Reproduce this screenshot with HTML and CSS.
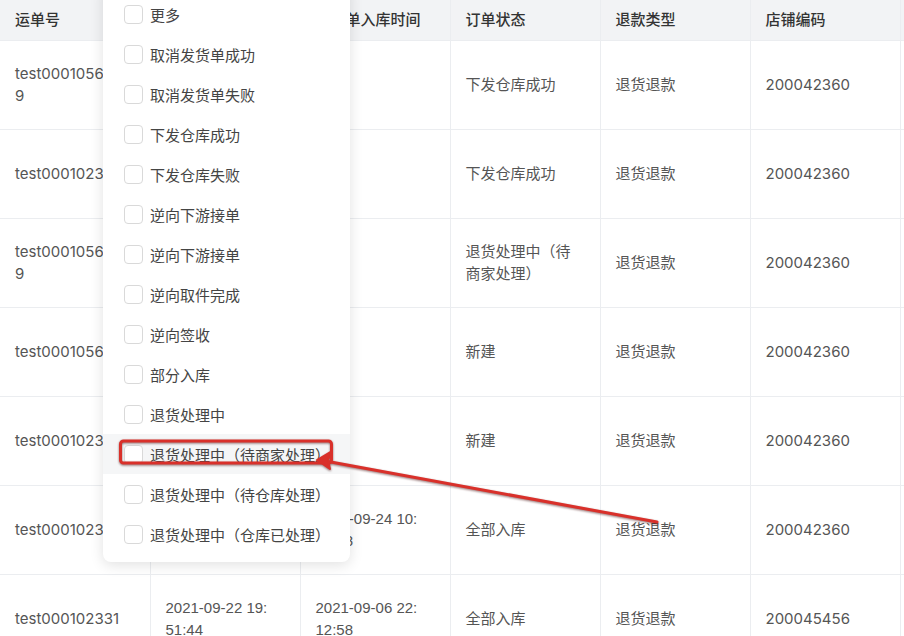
FILE: index.html
```html
<!DOCTYPE html>
<html lang="zh-CN">
<head>
    <meta charset="UTF-8">
    <meta name="viewport" content="width=device-width, initial-scale=1.0">
    <title>退货单列表</title>
    <link rel="stylesheet" href="styles.css">
</head>

<body>
    <main class="page">
        <table class="grid">
            <colgroup>
                <col><col><col><col><col><col><col>
            </colgroup>
            <thead>
                <tr>
                    <th>运单号</th>
                    <th>退货申请时间</th>
                    <th>退货单入库时间</th>
                    <th>订单状态</th>
                    <th>退款类型</th>
                    <th>店铺编码</th>
                    <th></th>
                </tr>
            </thead>
            <tbody>
                <tr>
                    <td>test0001056199</td>
                    <td class="time">2021-09-26 14:20:11</td>
                    <td class="time"></td>
                    <td>下发仓库成功</td>
                    <td>退货退款</td>
                    <td>200042360</td>
                    <td></td>
                </tr>
                <tr>
                    <td>test000102352</td>
                    <td class="time">2021-09-26 11:05:32</td>
                    <td class="time"></td>
                    <td>下发仓库成功</td>
                    <td>退货退款</td>
                    <td>200042360</td>
                    <td></td>
                </tr>
                <tr>
                    <td>test0001056189</td>
                    <td class="time">2021-09-25 17:42:08</td>
                    <td class="time"></td>
                    <td>退货处理中（待商家处理）</td>
                    <td>退货退款</td>
                    <td>200042360</td>
                    <td></td>
                </tr>
                <tr>
                    <td>test000105662</td>
                    <td class="time">2021-09-25 10:13:47</td>
                    <td class="time"></td>
                    <td>新建</td>
                    <td>退货退款</td>
                    <td>200042360</td>
                    <td></td>
                </tr>
                <tr>
                    <td>test000102348</td>
                    <td class="time">2021-09-24 16:30:25</td>
                    <td class="time"></td>
                    <td>新建</td>
                    <td>退货退款</td>
                    <td>200042360</td>
                    <td></td>
                </tr>
                <tr>
                    <td>test000102337</td>
                    <td class="time">2021-09-24 09:58:19</td>
                    <td class="time">2021-09-24 10:51:38</td>
                    <td>全部入库</td>
                    <td>退货退款</td>
                    <td>200042360</td>
                    <td></td>
                </tr>
                <tr>
                    <td>test000102331</td>
                    <td class="time">2021-09-22 19:51:44</td>
                    <td class="time">2021-09-06 22:12:58</td>
                    <td>全部入库</td>
                    <td>退货退款</td>
                    <td>200045456</td>
                    <td></td>
                </tr>
            </tbody>
        </table>

        <ul class="dropdown">
            <li class="option"><span class="box"></span>更多</li>
            <li class="option"><span class="box"></span>取消发货单成功</li>
            <li class="option"><span class="box"></span>取消发货单失败</li>
            <li class="option"><span class="box"></span>下发仓库成功</li>
            <li class="option"><span class="box"></span>下发仓库失败</li>
            <li class="option"><span class="box"></span>逆向下游接单</li>
            <li class="option"><span class="box"></span>逆向下游接单</li>
            <li class="option"><span class="box"></span>逆向取件完成</li>
            <li class="option"><span class="box"></span>逆向签收</li>
            <li class="option"><span class="box"></span>部分入库</li>
            <li class="option"><span class="box"></span>退货处理中</li>
            <li class="option hover"><span class="box"></span>退货处理中（待商家处理）</li>
            <li class="option"><span class="box"></span>退货处理中（待仓库处理）</li>
            <li class="option"><span class="box"></span>退货处理中（仓库已处理）</li>
        </ul>

        <!-- red annotation drawn over the screenshot -->
        <svg class="mark" width="904" height="636" viewBox="0 0 904 636">
            <rect x="120.5" y="441" width="211" height="22" rx="3" fill="none" stroke="#d9302a" stroke-width="3"/>
            <line x1="657" y1="522" x2="320" y2="460" stroke="#d9302a" stroke-width="3" stroke-linecap="round"/>
            <path d="M317 460 L332 451 L328 460 L330 469 Z" fill="#d9302a" stroke="#d9302a" stroke-width="2" stroke-linejoin="round"/>
        </svg>
    </main>
</body>
</html>
```

FILE: styles.css
```css
*{
    margin: 0;
    padding: 0;
    box-sizing: border-box;
}
body{
    font-family: Inter, "Noto Sans CJK SC", sans-serif;
    font-size: 15px;
    color: #555;
    background-color: #fff;
    overflow: hidden;
}
.page{
    position: relative;
    width: 904px;
    height: 636px;
    overflow: hidden;
}
.grid{
    border-collapse: collapse;
    table-layout: fixed;
    width: 1050px;
}
.grid col{
    width: 150px;
}
.grid th,
.grid td{
    border-right: 1px solid #ebedf0;
    border-bottom: 1px solid #ebedf0;
    padding: 0 25px 0 15px;
    text-align: left;
    vertical-align: middle;
    line-height: 22px;
    word-break: break-all;
}
.grid th{
    height: 40px;
    background-color: #f2f3f5;
    font-weight: 500;
    color: #333;
}
.grid td{
    height: 89px;
}
.grid .time{
    font-family: "Liberation Sans", "Noto Sans CJK SC", sans-serif;
    padding-right: 28px;
}
.dropdown{
    position: absolute;
    left: 103px;
    top: -14px;
    width: 247px;
    padding: 8px 0;
    list-style: none;
    background-color: #fff;
    border-radius: 0 0 8px 8px;
    box-shadow: 0 3px 14px rgba(0, 0, 0, 0.12);
}
.option{
    height: 40px;
    display: flex;
    align-items: center;
    gap: 7px;
    padding-left: 21px;
    color: #444;
    white-space: nowrap;
}
.option.hover{
    background-color: #f5f6f7;
}
.box{
    flex: none;
    width: 19px;
    height: 19px;
    border: 1px solid #d9d9d9;
    border-radius: 4px;
    background-color: #fff;
}
.mark{
    position: absolute;
    left: 0;
    top: 0;
    pointer-events: none;
    filter: drop-shadow(0 1px 1px rgba(60, 0, 0, 0.55));
}
```
